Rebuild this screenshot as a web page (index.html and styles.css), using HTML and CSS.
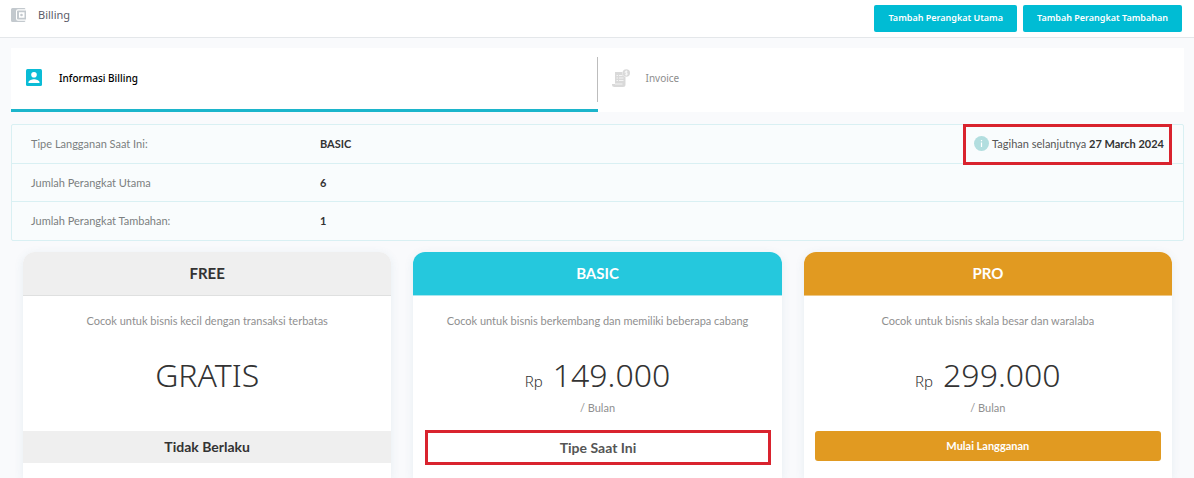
FILE: index.html
```html
<!DOCTYPE html>
<html lang="id">
<head>
<meta charset="utf-8">
<meta name="viewport" content="width=device-width, initial-scale=1">
<title>Billing</title>
<link rel="stylesheet" href="styles.css">
</head>
<body>
<header class="topbar">
  <div class="topbar-title">
    <svg class="icon-wallet" viewBox="0 0 16 14" aria-hidden="true">
      <path fill="#c3c9ce" d="M1.500 0h11.500a1.500 1.500 0 0 1 1.500 1.200H7a2 2 0 0 0-2 2v7.600a2 2 0 0 0 2 2h7.500A1.500 1.500 0 0 1 13 14H1.500A1.500 1.500 0 0 1 0 12.500v-11A1.500 1.500 0 0 1 1.500 0z"/>
      <path fill="#c3c9ce" fill-rule="evenodd" d="M7 2.500h8v9H7a1 1 0 0 1-1-1v-7a1 1 0 0 1 1-1zM8 4.300v5.400h5.500V4.300zM10.500 5.700a1.300 1.300 0 1 1 0 2.600 1.300 1.300 0 0 1 0-2.600z"/>
    </svg>
    <h1 class="title">Billing</h1>
  </div>
  <div class="topbar-actions">
    <button class="btn" type="button">Tambah Perangkat Utama</button>
    <button class="btn" type="button">Tambah Perangkat Tambahan</button>
  </div>
</header>
<main class="content">
  <nav class="tabs">
    <button class="tab tab-active" type="button">
      <svg class="icon-tab" viewBox="0 0 18 18" aria-hidden="true">
        <rect x="1" width="16" height="17" rx="1.500" fill="#0abcd6"/>
        <circle cx="9" cy="5.800" r="2.800" fill="#fff"/>
        <path fill="#fff" d="M3.500 14v-.8c0-1.900 3.600-2.900 5.500-2.900s5.500 1 5.500 2.900v.8z"/>
      </svg>
      Informasi Billing
    </button>
    <button class="tab" type="button">
      <svg class="icon-tab" viewBox="0 0 18 18" aria-hidden="true">
        <path fill="#d9d9d9" d="M3 3h7.500a4.500 4.500 0 0 0 3 5v7.500A2.500 2.500 0 0 1 11 18H2.500A2.500 2.500 0 0 1 0 15.500V15h3z"/>
        <path stroke="#fff" stroke-width=".7" fill="none" d="M4.500 6.500h1.500M7 6.500h3.500M4.500 9h1.500M7 9h4.500M4.500 11.500h1.500M7 11.500h4.500M3 15h7.500"/>
        <circle cx="14.300" cy="4" r="3.700" fill="#d9d9d9"/>
        <path stroke="#fff" stroke-width=".7" fill="none" d="M15.500 2.800c-.7-.8-2.500-.6-2.500.4 0 1.200 2.500.5 2.500 1.800 0 1-1.900 1.100-2.600.2M14.300 1.500v5"/>
      </svg>
      Invoice
    </button>
  </nav>

  <dl class="summary">
    <div class="summary-row">
      <dt class="summary-label">Tipe Langganan Saat Ini:</dt>
      <dd class="summary-value">BASIC</dd>
      <dd class="next-bill">
        <svg class="icon-info" viewBox="0 0 15 15" aria-hidden="true">
          <circle cx="7.500" cy="7.500" r="7.500" fill="#b2dedf"/>
          <path fill="#fff" d="M6.900 6.500h1.200v4.500H6.900zM6.900 4h1.200v1.300H6.900z"/>
        </svg>
        <span>Tagihan selanjutnya <strong>27 March 2024</strong></span>
      </dd>
    </div>
    <div class="summary-row">
      <dt class="summary-label">Jumlah Perangkat Utama</dt>
      <dd class="summary-value">6</dd>
    </div>
    <div class="summary-row">
      <dt class="summary-label">Jumlah Perangkat Tambahan:</dt>
      <dd class="summary-value">1</dd>
    </div>
  </dl>

  <section class="plans">
    <article class="plan">
      <h2 class="plan-name">FREE</h2>
      <p class="plan-desc">Cocok untuk bisnis kecil dengan transaksi terbatas</p>
      <p class="plan-price">GRATIS</p>
      <p class="plan-period"></p>
      <p class="plan-status plan-status-off">Tidak Berlaku</p>
    </article>
    <article class="plan">
      <h2 class="plan-name plan-name-basic">BASIC</h2>
      <p class="plan-desc">Cocok untuk bisnis berkembang dan memiliki beberapa cabang</p>
      <p class="plan-price"><span class="currency">Rp</span>149.000</p>
      <p class="plan-period">/ Bulan</p>
      <p class="plan-status plan-status-current">Tipe Saat Ini</p>
    </article>
    <article class="plan">
      <h2 class="plan-name plan-name-pro">PRO</h2>
      <p class="plan-desc">Cocok untuk bisnis skala besar dan waralaba</p>
      <p class="plan-price"><span class="currency">Rp</span>299.000</p>
      <p class="plan-period">/ Bulan</p>
      <button class="plan-button" type="button">Mulai Langganan</button>
    </article>
  </section>
</main>
</body>
</html>
```
FILE: styles.css
```css
* {
  box-sizing: border-box;
}

body {
  margin: 0;
  min-height: 100vh;
  display: flex;
  flex-direction: column;
  background: #f9fafc;
  color: #333;
  font-family: Lato, "Noto Sans", sans-serif;
  font-size: 11px;
  line-height: 16px;
}

h1, h2, p, dl, dd {
  margin: 0;
}

button {
  border: 0;
  font: inherit;
  cursor: pointer;
}

.topbar {
  display: flex;
  align-items: flex-start;
  justify-content: space-between;
  padding: 5px 12px 5px 11px;
  background: #fff;
  border-bottom: 1px solid #e4e7ea;
}

.topbar-title {
  display: flex;
  align-items: center;
  gap: 11px;
  padding-top: 2px;
}

.icon-wallet {
  width: 16px;
  height: 14px;
}

.title {
  font-family: "Noto Sans", sans-serif;
  font-size: 11px;
  font-weight: 400;
  color: #5b5b68;
}

.topbar-actions {
  display: flex;
  gap: 6px;
}

.btn {
  height: 27px;
  padding: 0 14px 2px;
  border-radius: 2px;
  background: #00bcd4;
  color: #fff;
  font-family: "Noto Sans", sans-serif;
  font-size: 9px;
  font-weight: 600;
}

.content {
  flex: 1;
  display: flex;
  flex-direction: column;
  padding: 10px 10px 0 11px;
}

.tabs {
  display: grid;
  grid-template-columns: 1fr 1fr;
  height: 64px;
  background: #fff;
}

.tab {
  display: flex;
  align-items: center;
  gap: 16px;
  padding: 0 14px 5px;
  background: none;
  color: #8d8d8d;
  font-family: "Noto Sans", sans-serif;
  font-size: 10px;
}

.tab-active {
  padding-bottom: 2px;
  border-bottom: 3px solid #1cb5cb;
  background: linear-gradient(#bdbdbd, #bdbdbd) right 0 top 9px / 1px 45px no-repeat;
  color: #000;
  font-weight: 500;
}

.icon-tab {
  width: 18px;
  height: 18px;
}

.summary {
  margin-top: 12px;
  background: #f9fcfd;
  border: 1px solid #d9f0f3;
  border-radius: 2px;
}

.summary-row {
  display: grid;
  grid-template-columns: 289px 1fr auto;
  align-items: center;
  height: 38px;
  padding: 0 11px 0 19px;
}

.summary-row + .summary-row {
  border-top: 1px solid #d9f0f3;
}

.summary-row:last-child {
  height: 39px;
}

.summary-label {
  color: #7b7f80;
}

.summary-value {
  font-weight: 700;
}

.next-bill {
  display: flex;
  align-items: center;
  gap: 3px;
  align-self: stretch;
  margin: -1px 0 -2px;
  padding: 0 8px 2px 11px;
  outline: 3px solid #d9232e;
  outline-offset: -3px;
  color: #555;
}

.next-bill strong {
  color: #333;
  font-weight: 700;
}

.icon-info {
  width: 15px;
  height: 15px;
}

.plans {
  flex: 1;
  display: grid;
  grid-template-columns: repeat(3, 1fr);
  gap: 22px;
  margin-top: 11px;
  padding: 0 12px;
}

.plan {
  display: flex;
  flex-direction: column;
  background: #fff;
  border-radius: 12px 12px 0 0;
  box-shadow: 0 2px 10px rgba(60, 120, 150, 0.1);
  text-align: center;
}

.plan-name {
  padding: 11px 0;
  border-bottom: 1px solid #dfe0e0;
  border-radius: 12px 12px 0 0;
  background: #efefef;
  font-size: 15px;
  line-height: 21px;
  font-weight: 700;
}

.plan-name-basic {
  background: #25c8dd;
  border-color: #a8e6ee;
  color: #fff;
}

.plan-name-pro {
  background: #e19a21;
  border-color: #edc785;
  color: #fff;
}

.plan-desc {
  padding-top: 17px;
  color: #8f8f8f;
}

.plan-price {
  padding-top: 26px;
  font-family: "Noto Sans", sans-serif;
  font-size: 32px;
  line-height: 40px;
  font-weight: 300;
}

.currency {
  margin-right: 10px;
  font-size: 15px;
  line-height: 16px;
}

.plan-period {
  height: 16px;
  margin-top: 5px;
  color: #8f8f8f;
}

.plan-status {
  margin-top: 15px;
  font-size: 14px;
  line-height: 32px;
  font-weight: 700;
}

.plan-status-off {
  background: #efefef;
}

.plan-status-current {
  margin: 14px 11px 0 12px;
  border: 3px solid #d9232e;
  line-height: 29px;
  color: #555;
}

.plan-button {
  height: 30px;
  margin: 15px 11px 0;
  border-radius: 3px;
  background: #e19a21;
  color: #fff;
  font-weight: 700;
}
```
